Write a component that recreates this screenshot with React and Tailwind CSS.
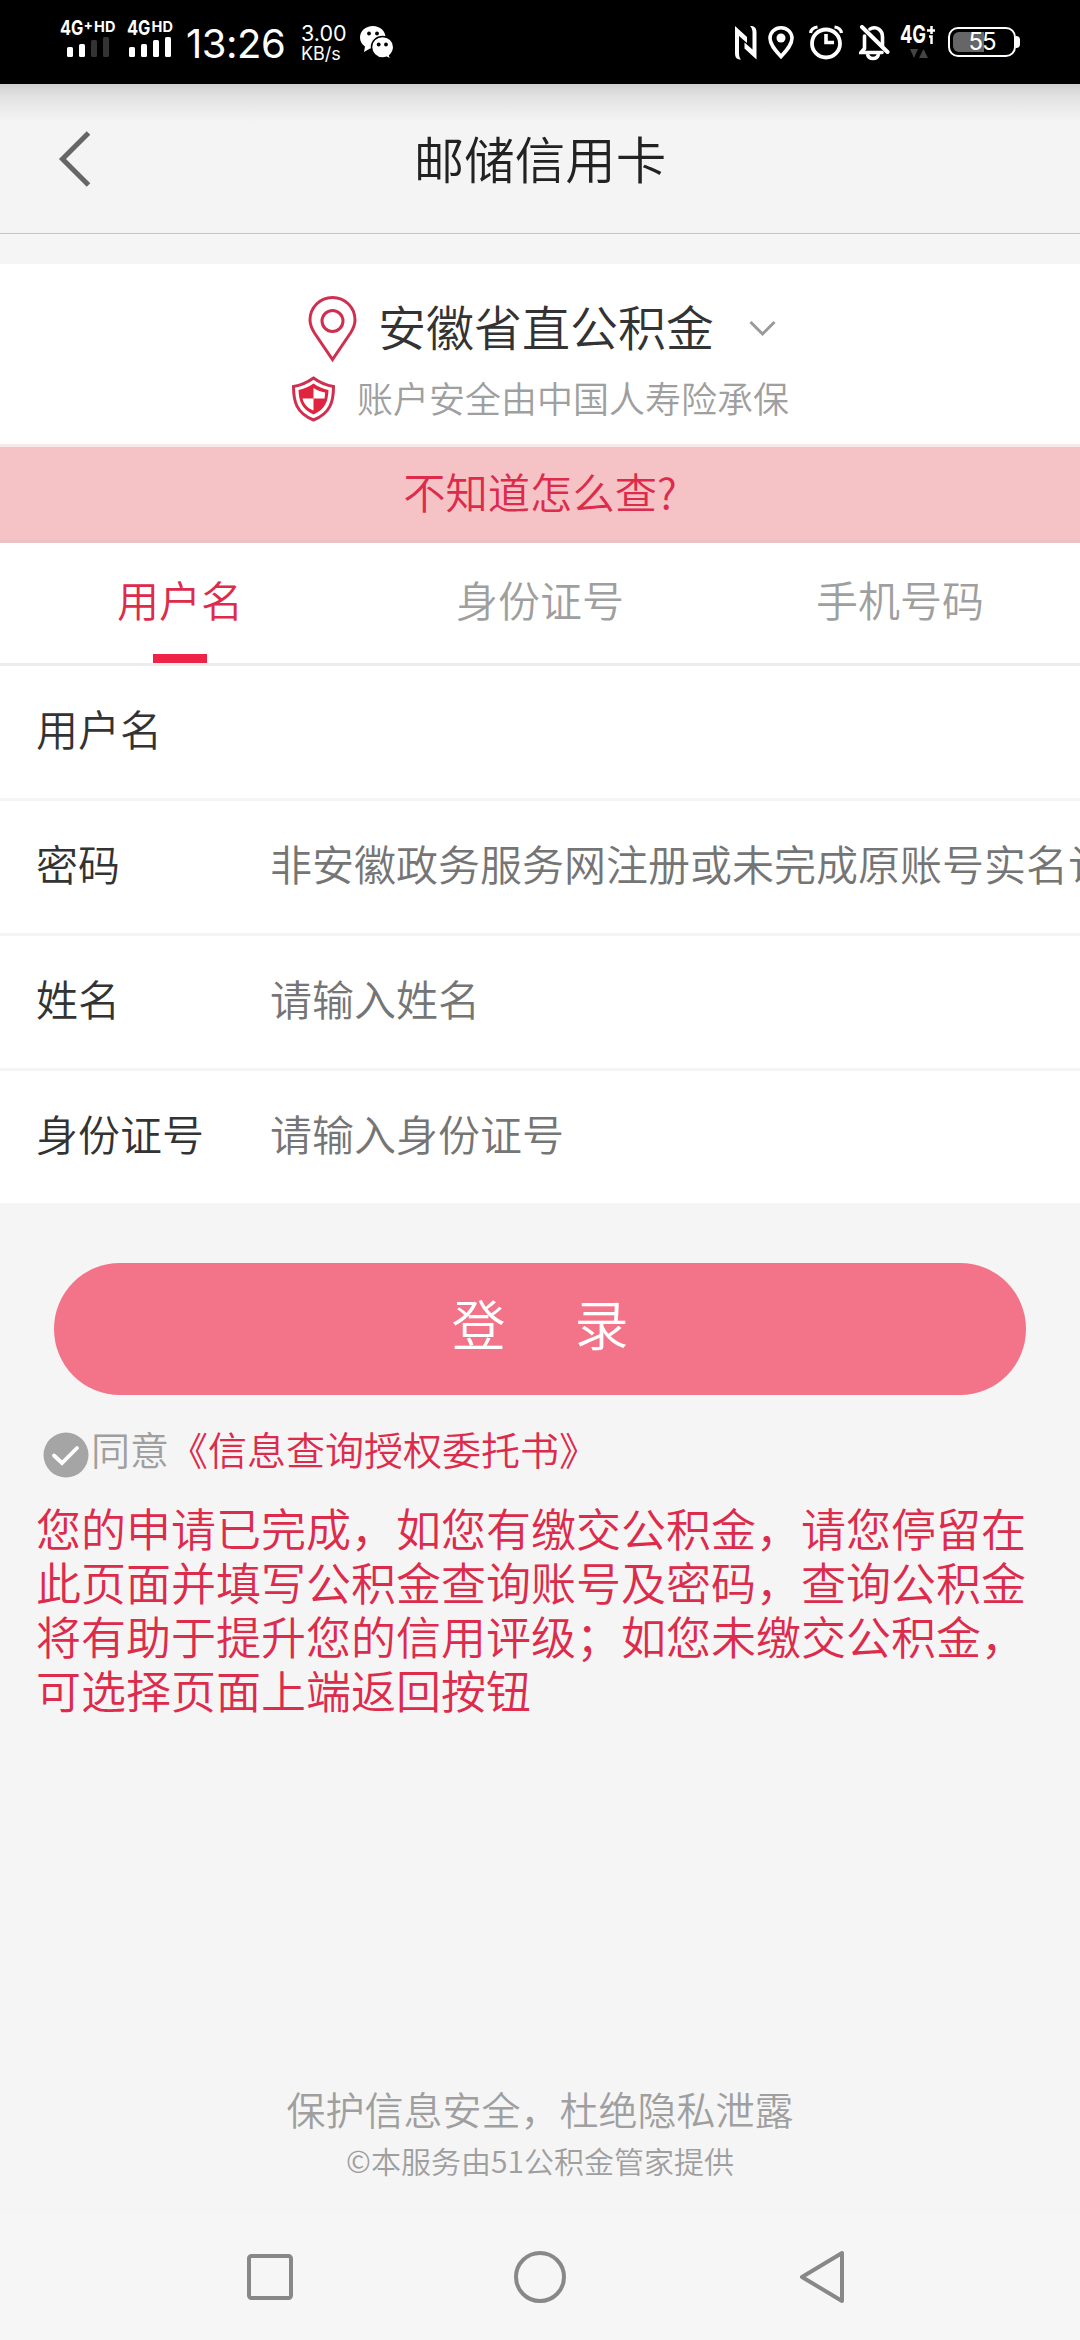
import React, { useState } from 'react';

const tabs = ['用户名', '身份证号', '手机号码'];

const fields = [
  { label: '用户名', placeholder: '' },
  { label: '密码', placeholder: '非安徽政务服务网注册或未完成原账号实名认证' },
  { label: '姓名', placeholder: '请输入姓名' },
  { label: '身份证号', placeholder: '请输入身份证号' },
];

const notice = [
  '您的申请已完成，如您有缴交公积金，请您停留在',
  '此页面并填写公积金查询账号及密码，查询公积金',
  '将有助于提升您的信用评级；如您未缴交公积金，',
  '可选择页面上端返回按钮',
];

const Signal = ({ plus, level, className }) => (
  <div className={className}>
    <div className="flex h-[17px] items-start font-bold leading-none">
      <span className="origin-left scale-x-[.82] text-[20px] leading-[17px]">4G</span>
      <span className={plus ? '-ml-[5px] text-[14px] leading-[10px]' : 'hidden'}>+</span>
      <span className={plus ? 'ml-[1px] text-[14.5px] leading-[13px]' : '-ml-[4px] text-[14.5px] leading-[13px]'}>HD</span>
    </div>
    <svg className={plus ? 'ml-[7px] block' : 'ml-[2px] block'} width="44" height="21" viewBox="0 0 44 21">
      {[10, 13, 17, 20].map((h, i) => (
        <rect key={h} x={i * 12} y={20 - h} width="6" height={h} rx="1.5" fill={i < level ? '#fff' : '#333'} />
      ))}
    </svg>
  </div>
);

const StatusBar = () => (
  <div className="flex h-[84px] bg-black font-['Inter','Noto_Sans_CJK_SC',sans-serif] font-normal text-white">
    <Signal plus level={2} className="ml-[60px] mt-[20px] w-[67px]" />
    <Signal level={4} className="mt-[20px] w-[59px]" />
    <div className="mt-[22px] w-[115px] whitespace-nowrap text-[40px] leading-[44px] tracking-[-.5px]">13:26</div>
    <div className="mt-[22px] w-[59px]">
      <div className="text-[21.5px] leading-[22px]">3.00</div>
      <div className="text-[18px] leading-[19px]">KB/s</div>
    </div>
    <svg className="mt-[25px]" width="34" height="36" viewBox="0 0 34 36">
      <path d="M13 1C5.500 1 0 6 0 12.500c0 4 2 7 5 9L4 27l6-3.500h3C20 23.500 25.500 19 25.500 12.500S20 1 13 1z" fill="#fff" />
      <circle cx="9" cy="8.500" r="1.900" />
      <circle cx="17" cy="8.500" r="1.900" />
      <path d="M22.500 11.500c-6 0-11 4.500-11 10.500s5 11 11 11c1.500 0 3-.3 4.200-.7l4 2-1-3.800c2.300-2 4-5 4-8.500 0-6-5-10.500-11.200-10.500z" fill="#fff" stroke="#000" strokeWidth="1.500" />
      <circle cx="18.700" cy="19.500" r="1.900" />
      <circle cx="26" cy="19.500" r="1.900" />
    </svg>
    <div className="flex-1" />
    <svg className="mr-[11px] mt-[25px]" width="22" height="36" viewBox="0 0 22 36" fill="#fff">
      <path d="M0 1l12 11v6L4 11v17c0 3 .5 5 2 6.500C2 34.500 0 33 0 28zM21.500 34.500l-12-11v-6l8 7V8c0-3-.5-5-2.500-7 4.500 0 6.500 1.500 6.500 6.500z" />
    </svg>
    <svg className="mr-[15px] mt-[25px]" width="26" height="36" viewBox="0 0 26 36">
      <path d="M13 2.800C7 2.800 2 7.300 2 13.300 2 20 8 26 13 31.500 18 26 24 20 24 13.300 24 7.300 19 2.800 13 2.800z" fill="none" stroke="#fff" strokeWidth="3.600" />
      <circle cx="13" cy="13" r="4.500" fill="#fff" />
    </svg>
    <svg className="mr-[16px] mt-[25px]" width="34" height="36" viewBox="0 0 34 36" fill="none" stroke="#fff">
      <circle cx="17" cy="18.500" r="14" strokeWidth="3.800" />
      <path d="M17 9v8.500h8" strokeWidth="3.600" />
      <path d="M1.500 8C2 4.500 5 2.500 8.500 2M32.500 8C32 4.500 29 2.500 25.500 2" strokeWidth="3.200" />
    </svg>
    <svg className="mr-[10px] mt-[25px]" width="31" height="36" viewBox="0 0 31 36" fill="none" stroke="#fff">
      <path d="M11 4C18 .5 23.500 5.500 23.500 12v9M5.500 11v12.500L2 27.500h21" strokeWidth="3.600" strokeLinecap="round" />
      <path d="M3 2l25.500 25" strokeWidth="4" strokeLinecap="round" />
      <path d="M8.500 29c1 6 10 6 11 0" strokeWidth="3.600" />
    </svg>
    <div className="mt-[24px] w-[48px]">
      <div className="flex h-[24px] items-start font-bold">
        <span className="origin-left scale-x-[.76] text-[24px] leading-[22px]">4G</span>
        <svg className="-ml-[7px] mt-[2px]" width="8" height="18" viewBox="0 0 8 18" fill="none" stroke="#fff" strokeWidth="2.500">
          <path d="M4.500 0v8M0 4.500h8M2 10.500h2.500V18" />
        </svg>
      </div>
      <svg className="ml-[10px] block" width="18" height="10" viewBox="0 0 18 10" fill="#444">
        <path d="M0 1h8L4 10zM9 10h9L13.500 1z" />
      </svg>
    </div>
    <div className="mr-[60px] mt-[27px] flex h-[30px] items-center">
      <div className="relative h-[30px] w-[68px] rounded-[10px] border-[2.5px] border-white">
        <div className="absolute left-[3px] top-[3px] h-[20px] w-[31px] rounded-l-[6px] bg-[#666]" />
        <div className="relative text-center text-[24px] leading-[26px] tracking-[-1px]">55</div>
      </div>
      <div className="h-[12px] w-[4px] rounded-r-[4px] bg-white" />
    </div>
  </div>
);

const Header = () => (
  <header className="grid h-[150px] grid-cols-[1fr_auto_1fr] items-center border-b border-[#c4c4c4] bg-[linear-gradient(to_bottom,#cfcfcf_0,#e2e2e2_12px,#f4f4f4_38px)]">
    <svg className="ml-[58px]" width="34" height="58" viewBox="0 0 34 58" fill="none" stroke="#666" strokeWidth="5">
      <path d="M30.500 3L4.500 29l26 26" />
    </svg>
    <h1 className="pb-[2px] text-[50.5px] leading-none text-[#222]">邮储信用卡</h1>
  </header>
);

const CityPicker = () => (
  <div className="mt-[30px] h-[180px] bg-white">
    <div className="flex h-[102px] items-start">
      <svg className="ml-[308px] mt-[31px]" width="49" height="68" viewBox="0 0 49 68" fill="none" stroke="#d0304f" strokeWidth="3">
        <path d="M24.500 2.500C12 2.500 2 12.500 2 25c0 5 2 9 4.500 13l18 26.500 18-26.500C45 34 47 30 47 25 47 12.500 37 2.500 24.500 2.500z" />
        <circle cx="24.500" cy="26" r="10.500" />
      </svg>
      <span className="ml-[21px] mt-[26px] text-[48px] leading-[70px] text-[#333]">安徽省直公积金</span>
      <svg className="ml-[35px] mt-[56px]" width="27" height="18" viewBox="0 0 27 18" fill="none" stroke="#999" strokeWidth="3">
        <path d="M1.500 2l12 12 12-12" />
      </svg>
    </div>
    <div className="flex h-[56px] items-start">
      <svg className="ml-[291px] mt-[10px]" width="45" height="46" viewBox="0 0 45 46">
        <path d="M22.500 2C17 6 9 9.500 2.500 10.500c0 15 3 27 20 33.500 17-6.500 20-18.500 20-33.500C36 9.500 28 6 22.500 2z" fill="none" stroke="#d0304f" strokeWidth="3" />
        <path d="M22.500 7.500C18 10.500 13 13 7.500 14c.5 11 3 19 15 24.500C34.500 33 37 25 37.500 14c-5.500-1-10.500-3.500-15-6.500z" fill="#e0243f" />
        <path d="M22.500 12v10.500h11c.5-2 .6-4 .6-6-4.500-1-8.500-2.500-11.600-4.500zM22.500 22.500h-11c1.500 6 5 9.500 11 12z" fill="#fff" />
      </svg>
      <span className="ml-[21px] mt-[8px] text-[36px] leading-[46px] text-[#9f9f9f]">账户安全由中国人寿险承保</span>
    </div>
  </div>
);

const NavBar = () => (
  <nav className="flex h-[126px] items-center bg-[#f6f6f6]">
    <svg className="ml-[247px]" width="46" height="46" viewBox="0 0 46 46">
      <rect x="2" y="2" width="42" height="42" rx="2.500" fill="none" stroke="#888" strokeWidth="4" />
    </svg>
    <svg className="ml-[221px]" width="52" height="52" viewBox="0 0 52 52">
      <circle cx="26" cy="26" r="24" fill="none" stroke="#888" strokeWidth="4" />
    </svg>
    <svg className="ml-[233px]" width="46" height="54" viewBox="0 0 46 54">
      <path d="M43 3v48L3 27z" fill="none" stroke="#888" strokeWidth="4" strokeLinejoin="round" />
    </svg>
  </nav>
);

const App = () => {
  const [activeTab, setActiveTab] = useState(0);

  return (
    <div className="flex h-[2340px] w-[1080px] flex-col overflow-hidden bg-[#f5f5f5] font-['Noto_Sans_CJK_SC',sans-serif] font-[350]">
      <StatusBar />
      <Header />
      <CityPicker />

      <div className="h-[99px] border-y-[3px] border-t-[#f6e9ea] border-b-[#edc2c7] bg-[#f5c3c6] text-center text-[42.3px] leading-[88px] text-[#dd2b4c]">
        不知道怎么查?
      </div>

      {/* Login type tabs */}
      <div className="grid h-[123px] grid-cols-3 border-b-[3px] border-[#ededed] bg-white">
        {tabs.map((tab, i) => (
          <button
            key={tab}
            onClick={() => setActiveTab(i)}
            className={
              i === activeTab
                ? 'flex flex-col items-center text-[42px] text-[#dd2b4c]'
                : 'flex flex-col items-center text-[42px] text-[#9f9f9f]'
            }
          >
            <span className="h-[111px] leading-[111px]">{tab}</span>
            {i === activeTab && <span className="h-[9px] w-[54px] bg-[#ee2345]" />}
          </button>
        ))}
      </div>

      {/* Form */}
      <div className="bg-white">
        {fields.map((field) => (
          <label key={field.label} className="flex h-[135px] items-center overflow-hidden border-b-[3px] border-[#f4f4f4] pb-[10px] pl-[36px] text-[42px]">
            <span className="w-[234px] shrink-0 text-[#333]">{field.label}</span>
            <span className="shrink-0 whitespace-nowrap text-[#757575]">{field.placeholder}</span>
          </label>
        ))}
      </div>

      <button className="mx-[54px] mt-[57px] flex h-[132px] shrink-0 items-center justify-center gap-[69px] rounded-full bg-[#f37389] pb-[13px] text-[54px] text-white">
        <span>登</span>
        <span>录</span>
      </button>

      <div className="mt-[25px] flex h-[60px] items-center pl-[43px] text-[39px] leading-[56px]">
        <svg className="mt-[10px]" width="46" height="46" viewBox="0 0 46 46">
          <circle cx="23" cy="23" r="22.500" fill="#a5a5a5" />
          <path d="M11 23.500l8 7.500 15-15" fill="none" stroke="#fff" strokeWidth="3.800" strokeLinecap="round" />
        </svg>
        <span className="-mt-[4px] ml-[2px] text-[#9f9f9f]">同意</span>
        <span className="-mt-[4px] text-[#dd2b4c]">《信息查询授权委托书》</span>
      </div>

      <div className="mt-[21px] pl-[36px] text-[45px] leading-[54px] text-[#dd2b4c]">
        {notice.map((line) => (
          <p key={line} className="whitespace-nowrap">{line}</p>
        ))}
      </div>

      <footer className="mt-auto pb-[32px] text-center text-[#9f9f9f]">
        <p className="-mt-[2px] mb-[2px] text-[39px] leading-[56px]">保护信息安全，杜绝隐私泄露</p>
        <p className="text-[30px] leading-[44px]">©本服务由51公积金管家提供</p>
      </footer>
      <NavBar />
    </div>
  );
};

export default App;
